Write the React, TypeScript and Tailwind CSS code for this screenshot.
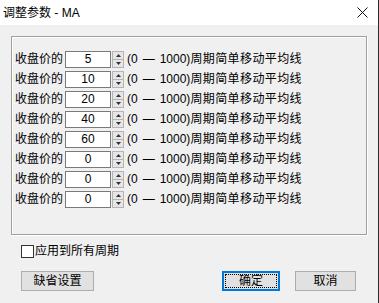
import React from 'react';

const FONT = '"Liberation Sans", "Noto Sans CJK SC", sans-serif';

const VALUES = ['5', '10', '20', '40', '60', '0', '0', '0'];

const Spinner: React.FC = () => (
    <div className="ml-[1px] flex h-[17px] w-[12px] flex-col border border-[#b4b4b4] bg-[#e6e6e6]">
        <div className="flex flex-1 items-center justify-center border-b border-[#b4b4b4]">
            <svg width="5" height="3" viewBox="0 0 5 3"><path d="M2.5 0 L5 3 L0 3 Z" fill="#333" /></svg>
        </div>
        <div className="flex flex-1 items-center justify-center">
            <svg width="5" height="3" viewBox="0 0 5 3"><path d="M0 0 L5 0 L2.5 3 Z" fill="#333" /></svg>
        </div>
    </div>
);

const ParamRow: React.FC<{ value: string }> = ({ value }) => (
    <div className="flex h-[20px] items-center leading-[14px]">
        <span className="w-[48px]">收盘价的</span>
        <div className="ml-[2px] flex h-[17px] w-[46px] items-center justify-center border border-[#7a7a7a] bg-white">
            {value}
        </div>
        <Spinner />
        <span className="ml-[3px]">(0</span>
        <span className="ml-[5px]">—</span>
        <span className="ml-[5px]">1000)</span>
        <span className="tracking-[0.4px]">周期简单移动平均线</span>
    </div>
);

const App: React.FC = () => {
    return (
        <div className="flex h-[303px] w-[379px] flex-col border-r border-[#2b2b2b] bg-[#f0f0f0] text-[12px] text-black" style={{ fontFamily: FONT }}>
            {/* title bar */}
            <div className="flex h-[25px] items-center justify-between bg-white pl-[3px] pr-[10px]">
                <span className="text-[12px] leading-[14px]">调整参数 - MA</span>
                <svg width="11" height="11" viewBox="0 0 11 11">
                    <path d="M0.5 0.5 L10.5 10.5 M10.5 0.5 L0.5 10.5" stroke="#111" strokeWidth="1" />
                </svg>
            </div>

            {/* group box */}
            <div className="ml-[11px] mt-[11px] h-[199px] w-[356px] border border-[#a0a0a0] pl-[3px] pt-[12px] shadow-[inset_1px_1px_0_#fff,1px_1px_0_#fff]">
                {VALUES.map((v, i) => <ParamRow key={i} value={v} />)}
            </div>

            <div className="ml-[21px] mt-[9px] flex h-[14px] items-center">
                <div className="h-[13px] w-[13px] border border-[#333] bg-white" />
                <span className="ml-[1px] leading-[14px]">应用到所有周期</span>
            </div>

            <div className="mt-[13px] flex items-start">
                <button className="ml-[21px] flex h-[20px] w-[73px] items-center justify-center border border-[#adadad] bg-[#e1e1e1] leading-[14px]">缺省设置</button>
                <button className="ml-[128px] flex h-[20px] w-[58px] items-center justify-center border-2 border-[#0078d7] bg-[#e1e1e1] p-[1px]">
                    <span className="flex h-full w-full items-center justify-center border border-dotted border-black leading-[14px]">确定</span>
                </button>
                <button className="ml-[15px] flex h-[20px] w-[61px] items-center justify-center border border-[#adadad] bg-[#e1e1e1] leading-[14px]">取消</button>
            </div>
        </div>
    );
};

export default App;
